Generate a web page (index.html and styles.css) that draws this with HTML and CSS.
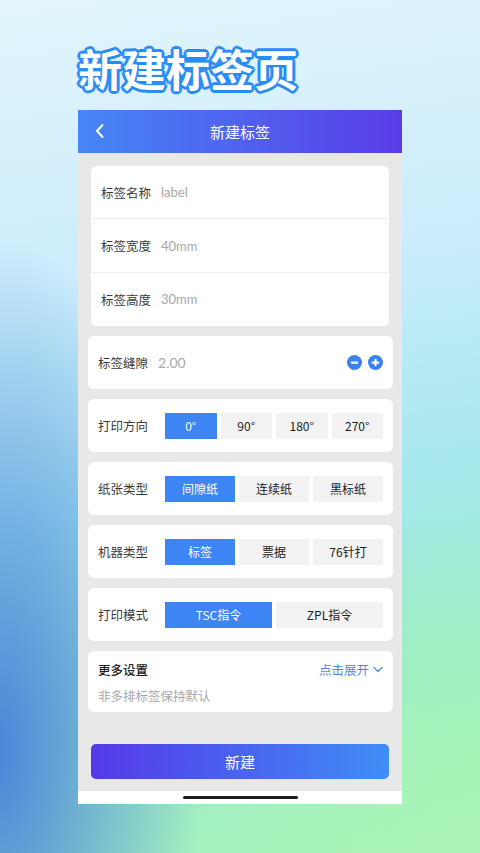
FILE: index.html
```html
<!DOCTYPE html>
<html>
<head>
  <meta charset="utf-8">
  <link rel="stylesheet" href="styles.css">
</head>
<body>
  <h1 class="promo-title">新建标签页</h1>

  <div class="phone">
    <div class="nav">
      <svg class="nav-back" width="10" height="16" viewBox="0 0 10 16" fill="none" stroke="#fff" stroke-width="2" stroke-linecap="round" stroke-linejoin="round">
        <path d="M7.5 2L2 8l5.5 6"/>
      </svg>
      <div class="nav-title">新建标签</div>
    </div>

    <div class="content">
      <div class="card card-narrow">
        <div class="field">
          <span class="label">标签名称</span>
          <span class="value">label</span>
        </div>
        <div class="field">
          <span class="label">标签宽度</span>
          <span class="value">40mm</span>
        </div>
        <div class="field">
          <span class="label">标签高度</span>
          <span class="value">30mm</span>
        </div>
      </div>

      <div class="card row">
        <span class="label">标签缝隙</span>
        <span class="value">2.00</span>
        <div class="steppers">
          <svg width="15" height="15" viewBox="0 0 16 16">
            <circle cx="8" cy="8" r="8" fill="#3b82f0"/>
            <rect x="4" y="6.8" width="8" height="2.4" rx="1" fill="#fff"/>
          </svg>
          <svg width="15" height="15" viewBox="0 0 16 16">
            <circle cx="8" cy="8" r="8" fill="#3b82f0"/>
            <rect x="4" y="6.8" width="8" height="2.4" rx="1" fill="#fff"/>
            <rect x="6.8" y="4" width="2.4" height="8" rx="1" fill="#fff"/>
          </svg>
        </div>
      </div>

      <div class="card row">
        <span class="label label-fixed">打印方向</span>
        <div class="segments">
          <div class="seg active">0°</div>
          <div class="seg">90°</div>
          <div class="seg">180°</div>
          <div class="seg">270°</div>
        </div>
      </div>

      <div class="card row">
        <span class="label label-fixed">纸张类型</span>
        <div class="segments">
          <div class="seg active">间隙纸</div>
          <div class="seg">连续纸</div>
          <div class="seg">黑标纸</div>
        </div>
      </div>

      <div class="card row">
        <span class="label label-fixed">机器类型</span>
        <div class="segments">
          <div class="seg active">标签</div>
          <div class="seg">票据</div>
          <div class="seg">76针打</div>
        </div>
      </div>

      <div class="card row">
        <span class="label label-fixed">打印模式</span>
        <div class="segments">
          <div class="seg active">TSC指令</div>
          <div class="seg">ZPL指令</div>
        </div>
      </div>

      <div class="card more">
        <div class="more-head">
          <span class="more-title">更多设置</span>
          <span class="more-toggle">点击展开
            <svg width="10" height="7" viewBox="0 0 10 7" fill="none" stroke="#4a8af0" stroke-width="1.3" stroke-linecap="round" stroke-linejoin="round">
              <path d="M1 1.5l4 4 4-4"/>
            </svg>
          </span>
        </div>
        <div class="more-hint">非多排标签保持默认</div>
      </div>

      <div class="submit">新建</div>
    </div>

    <div class="home-bar">
      <div class="home-indicator"></div>
    </div>
  </div>
</body>
</html>
```

FILE: styles.css
```css
* {
  margin: 0;
  padding: 0;
  box-sizing: border-box;
}

body {
  width: 480px;
  height: 853px;
  overflow: hidden;
  font-family: "Noto Sans CJK SC", "Noto Sans", sans-serif;
  background:
    radial-gradient(ellipse 42% 60% at 0% 88%, rgba(72, 128, 220, 0.95), rgba(72, 128, 220, 0) 100%),
    radial-gradient(ellipse 60% 40% at 100% 100%, rgba(170, 245, 180, 0.9), rgba(170, 245, 180, 0) 100%),
    linear-gradient(172deg, #e2f5fb 0%, #cdedfc 30%, #a6e8ec 58%, #98ecc8 80%, #aaf3bc 100%);
}

.promo-title {
  margin: 42px 0 0 78px;
  height: 68px;
  font-size: 44px;
  line-height: 52px;
  font-weight: 700;
  color: #fff;
  text-shadow:
    2px 0 0 #2b8cf7, -2px 0 0 #2b8cf7, 0 2px 0 #2b8cf7, 0 -2px 0 #2b8cf7,
    2px 2px 0 #2b8cf7, -2px -2px 0 #2b8cf7, 2px -2px 0 #2b8cf7, -2px 2px 0 #2b8cf7,
    3px 0 0 #2b8cf7, -3px 0 0 #2b8cf7, 0 3px 0 #2b8cf7, 0 -3px 0 #2b8cf7;
}

.phone {
  width: 324px;
  margin-left: 78px;
}

.nav {
  height: 43px;
  display: flex;
  align-items: center;
  justify-content: center;
  position: relative;
  background: linear-gradient(90deg, #4587f6, #5a3ce7);
}

.nav-back {
  position: absolute;
  left: 17px;
  top: 13px;
}

.nav-title {
  color: #fff;
  font-size: 15px;
}

.content {
  background: #e8e8e8;
  padding: 13px 9px 12px 10px;
}

.card {
  background: #fff;
  border-radius: 6px;
  margin-bottom: 10px;
}

.card-narrow {
  margin: 0 4px 10px 3px;
}

.field {
  height: 53.4px;
  display: flex;
  align-items: center;
  padding: 0 10px;
  border-bottom: 1px solid #f0f0f0;
}

.field:last-child {
  border-bottom: none;
}

.label {
  font-size: 12.5px;
  color: #3a3a3a;
}

.value {
  font-size: 12.5px;
  color: #a8a8a8;
  margin-left: 10px;
}

.field .value {
  font-family: "Lato", "Noto Sans CJK SC", sans-serif;
  font-size: 13px;
}

.row {
  height: 53px;
  display: flex;
  align-items: center;
  padding: 0 10px;
}

.row .value {
  font-family: "Lato", "Noto Sans CJK SC", sans-serif;
  font-size: 14px;
}

.steppers {
  margin-left: auto;
  display: flex;
  gap: 6px;
}

.label-fixed {
  width: 67px;
  flex-shrink: 0;
}

.segments {
  flex: 1;
  display: flex;
  gap: 4px;
}

.seg {
  flex: 1;
  height: 26px;
  display: flex;
  align-items: center;
  justify-content: center;
  background: #f2f2f2;
  font-size: 12px;
  color: #222;
}

.seg.active {
  background: #3d84f5;
  color: #fff;
}

.more {
  height: 61px;
  padding: 8px 10px 0;
}

.more-head {
  display: flex;
  align-items: center;
  justify-content: space-between;
  height: 20px;
}

.more-title {
  font-size: 12.5px;
  font-weight: 500;
  color: #222;
}

.more-toggle {
  display: flex;
  align-items: center;
  gap: 4px;
  font-size: 12.5px;
  color: #4a8af0;
}

.more-hint {
  margin-top: 7px;
  font-size: 12.5px;
  color: #a8a8a8;
}

.submit {
  margin: 32px 4px 0 3px;
  height: 35px;
  border-radius: 5px;
  display: flex;
  align-items: center;
  justify-content: center;
  color: #fff;
  font-size: 15px;
  background: linear-gradient(90deg, #5539e8, #3f8df6);
}

.home-bar {
  height: 13px;
  background: #fff;
  display: flex;
  align-items: center;
  justify-content: center;
}

.home-indicator {
  width: 115px;
  height: 3px;
  border-radius: 2px;
  background: #1c1c1c;
}
```
